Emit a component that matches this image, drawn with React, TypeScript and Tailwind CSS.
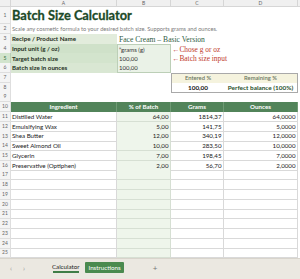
import React from "react";

const GRID = "grid grid-cols-[11px_106px_54px_53px_74px_2px]";
const RH = "h-[9.78px]";

function RowNum({ n, active }: { n: number; active?: boolean }) {
  return (
    <div
      className={`flex items-center justify-center border-r border-b text-[5px] leading-none ${
        active
          ? "bg-[#d2e4cd] text-[#2c6a35] border-[#b9cfb4]"
          : "bg-[#f4f4f4] text-[#666] border-[#dedede]"
      }`}
    >
      {n}
    </div>
  );
}

const data = [
  ["Distilled Water", "64,00", "1814,37", "64,0000"],
  ["Emulsifying Wax", "5,00", "141,75", "5,0000"],
  ["Shea Butter", "12,00", "340,19", "12,0000"],
  ["Sweet Almond Oil", "10,00", "283,50", "10,0000"],
  ["Glycerin", "7,00", "198,45", "7,0000"],
  ["Preservative (Optiphen)", "2,00", "56,70", "2,0000"],
];

const serif = "font-['Liberation_Serif',serif]";

export default function App() {
  const rows: React.ReactNode[] = [];
  for (let i = 0; i < 15; i++) {
    const n = 11 + i;
    const d = data[i];
    rows.push(
      <div key={n} className={`${GRID} ${RH}`}>
        <RowNum n={n} />
        <div className="flex items-center border-r border-b border-[#d9d9d9] pl-[1px] text-[6.2px] text-[#1a1a1a] whitespace-nowrap overflow-hidden">
          {d ? d[0] : ""}
        </div>
        <div className="flex items-center justify-end border-r border-b border-[#d6dfd3] bg-[#eef5eb] pr-[1.5px] text-[6.2px] text-[#1a1a1a]">
          {d ? d[1] : ""}
        </div>
        <div className="flex items-center justify-end border-r border-b border-[#d9d9d9] pr-[1.5px] text-[6.2px] text-[#1a1a1a]">
          {d ? d[2] : ""}
        </div>
        <div className="flex items-center justify-end border-r border-b border-[#d9d9d9] pr-[1.5px] text-[6.2px] text-[#1a1a1a]">
          {d ? d[3] : ""}
        </div>
        <div />
      </div>
    );
  }

  return (
    <div className="w-[300px] h-[279px] overflow-hidden bg-white font-['Lato','Liberation_Sans',sans-serif] flex flex-col">
      {/* column header */}
      <div className={`${GRID} h-[7px] bg-[#f0f0f0] border-b border-[#d6d6d6]`}>
        <div className="border-r border-[#d6d6d6]" />
        {["A", "B", "C", "D"].map((l) => (
          <div
            key={l}
            className="flex items-center justify-center border-r border-[#d6d6d6] text-[5px] leading-none text-[#666]"
          >
            {l}
          </div>
        ))}
        <div />
      </div>

      {/* row 1 */}
      <div className={`${GRID} h-[17px]`}>
        <RowNum n={1} />
        <div className="flex items-center pl-[1px] whitespace-nowrap overflow-visible">
          <span className="text-[12.8px] font-bold text-[#1c4a28] leading-none [-webkit-text-stroke:0.3px_#1c4a28]">
            Batch Size Calculator
          </span>
        </div>
      </div>

      {/* row 2 */}
      <div className={`${GRID} ${RH}`}>
        <RowNum n={2} />
        <div className="flex items-center pl-[1px] whitespace-nowrap text-[5.7px] text-[#7a7a7a]">
          Scale any cosmetic formula to your desired batch size. Supports grams and ounces.
        </div>
      </div>

      {/* row 3 */}
      <div className={`${GRID} ${RH}`}>
        <RowNum n={3} />
        <div className="flex items-center pl-[1px] bg-[#e2ecdc] border-b border-white text-[6.2px] font-bold text-[#1f2f22] whitespace-nowrap">
          Recipe / Product Name
        </div>
        <div className={`flex items-center pl-[2px] whitespace-nowrap text-[7.6px] text-[#2f5e43] ${serif}`}>
          Face Cream – Basic Version
        </div>
      </div>

      {/* row 4 */}
      <div className={`${GRID} ${RH}`}>
        <RowNum n={4} />
        <div className="flex items-center pl-[1px] bg-[#cfe1c9] border-b border-white text-[6.2px] font-bold text-[#1f2f22] whitespace-nowrap">
          Input unit (g / oz)
        </div>
        <div className="flex items-center pl-[1px] bg-[#eaf2e7] border border-[#bccfb7] text-[6px] text-[#333] whitespace-nowrap">
          ”grams (g)
        </div>
        <div className={`flex items-center pl-[1px] whitespace-nowrap text-[7.4px] text-[#c0392b] ${serif}`}>
          ←Chose g or oz
        </div>
      </div>

      {/* row 5 */}
      <div className={`${GRID} ${RH}`}>
        <RowNum n={5} active />
        <div className="flex items-center pl-[1px] bg-[#d3e4cd] border-b border-white text-[6.2px] font-bold text-[#1f2f22] whitespace-nowrap">
          Target batch size
        </div>
        <div className="flex items-center pl-[1px] bg-[#eaf2e7] border-x border-b border-[#bccfb7] text-[6px] text-[#333]">
          100,00
        </div>
        <div className={`flex items-center pl-[1px] whitespace-nowrap text-[7.4px] text-[#c0392b] ${serif}`}>
          ←Batch size input
        </div>
      </div>

      {/* row 6 */}
      <div className={`${GRID} ${RH}`}>
        <RowNum n={6} />
        <div className="flex items-center pl-[1px] bg-[#d9e7d3] text-[6.2px] font-bold text-[#1f2f22] whitespace-nowrap">
          Batch size in ounces
        </div>
        <div className="flex items-center pl-[1px] bg-[#eaf2e7] border-x border-b border-[#bccfb7] text-[6px] text-[#333]">
          100,00
        </div>
      </div>

      {/* row 7 */}
      <div className={`${GRID} ${RH}`}>
        <RowNum n={7} />
        <div />
        <div />
        <div className="flex items-center justify-center bg-[#f5f3de] border-l border-t border-[#a9a9a9] text-[5.8px] font-semibold text-[#6b765f]">
          Entered %
        </div>
        <div className="flex items-center justify-center bg-[#f5f3de] border-r border-t border-[#a9a9a9] text-[5.8px] font-semibold text-[#6b765f]">
          Remaining %
        </div>
      </div>

      {/* row 8 */}
      <div className={`${GRID} ${RH}`}>
        <RowNum n={8} />
        <div />
        <div />
        <div className="flex items-center justify-center bg-white border-l border-b border-[#a9a9a9] text-[6.4px] font-bold text-[#111]">
          100,00
        </div>
        <div className="flex items-center justify-center bg-white border-r border-b border-[#a9a9a9] text-[6.4px] font-bold text-[#1f4f2b] whitespace-nowrap">
          Perfect balance (100%)
        </div>
      </div>

      {/* row 9 */}
      <div className={`${GRID} ${RH}`}>
        <RowNum n={9} />
      </div>

      {/* row 10 header */}
      <div className={`${GRID} ${RH}`}>
        <RowNum n={10} />
        {["Ingredient", "% of Batch", "Grams", "Ounces"].map((h) => (
          <div
            key={h}
            className="flex items-center justify-center bg-[#52845a] border-r border-[#6f9b75] text-[6.2px] font-bold text-white whitespace-nowrap"
          >
            {h}
          </div>
        ))}
      </div>

      {rows}

      {/* tab bar */}
      <div className="flex-1 bg-[#ebe8e1] border-t border-[#d8d4cc] flex items-start pt-[3px] text-[6.2px]">
        <div className="flex items-center h-[12px] pl-[10px] gap-[11px] text-[#9a9a9a] text-[7px]">
          <span>‹</span>
          <span>›</span>
        </div>
        <div className="ml-[27px] flex flex-col items-center h-[12px] justify-center">
          <span className="text-[#222] leading-none">Calculator</span>
          <span className="mt-[1px] h-[1.5px] w-[26px] bg-[#3f7d47]" />
        </div>
        <div className="ml-[6px] h-[11px] px-[3px] flex items-center bg-[#4a8a4f] text-white rounded-[1px]">
          Instructions
        </div>
        <div className="ml-[29px] h-[12px] flex items-center text-[#777] text-[8px]">+</div>
      </div>
    </div>
  );
}
